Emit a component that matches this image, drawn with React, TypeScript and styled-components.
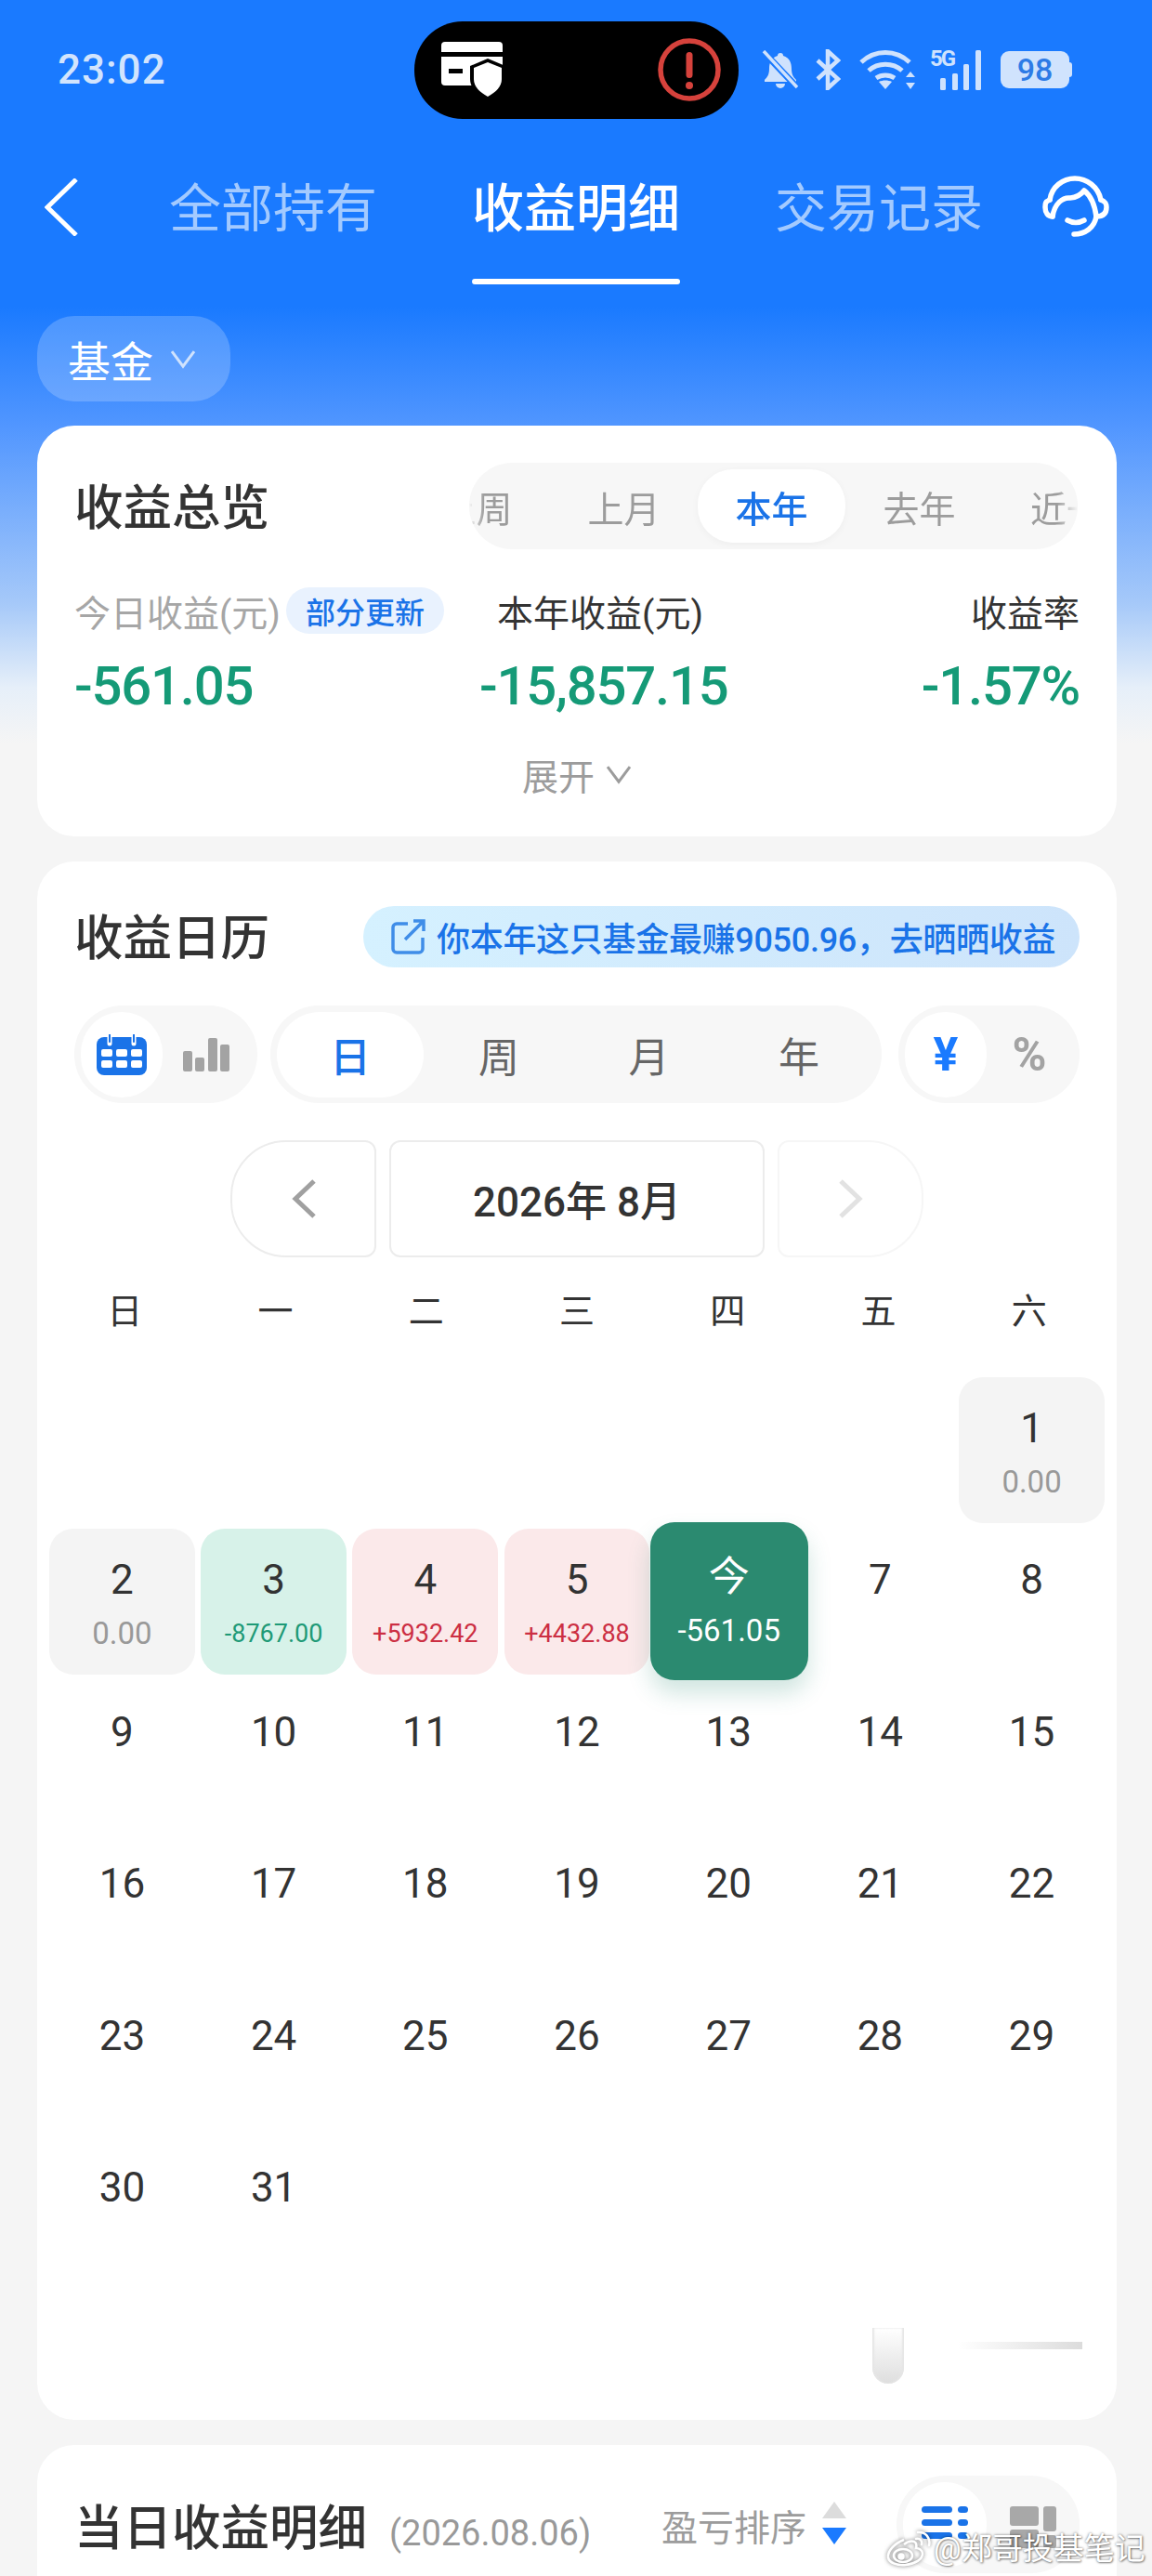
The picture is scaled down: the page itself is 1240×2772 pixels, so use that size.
import { createGlobalStyle } from 'styled-components';
import styled from 'styled-components';

const GlobalStyle = createGlobalStyle`
  html, body {
    margin: 0;
    padding: 0;
    background: #f5f5f5;
  }
  body {
    font-family: Roboto, "Noto Sans CJK SC", sans-serif;
  }
  * {
    box-sizing: border-box;
  }
`;

const BLUE = '#1a73e8';
const GREEN = '#159a77';

type Tone = 'plain' | 'flat' | 'loss' | 'gain' | 'today';

interface DayCell {
  label: string;
  amount?: string;
  tone: Tone;
}

const WEEKDAYS = ['日', '一', '二', '三', '四', '五', '六'];

const buildDays = (): (DayCell | null)[] => {
  const days: (DayCell | null)[] = [null, null, null, null, null, null];
  days.push({ label: '1', amount: '0.00', tone: 'flat' });
  days.push({ label: '2', amount: '0.00', tone: 'flat' });
  days.push({ label: '3', amount: '-8767.00', tone: 'loss' });
  days.push({ label: '4', amount: '+5932.42', tone: 'gain' });
  days.push({ label: '5', amount: '+4432.88', tone: 'gain' });
  days.push({ label: '今', amount: '-561.05', tone: 'today' });
  for (let d = 7; d <= 31; d++) {
    days.push({ label: String(d), tone: 'plain' });
  }
  return days;
};

const Page = styled.div`
  position: relative;
  width: 1240px;
  height: 2772px;
  overflow: hidden;
  background: linear-gradient(
    180deg,
    #1a7aff 0,
    #1a7aff 330px,
    #5196ff 458px,
    #a6c9f9 650px,
    #e6eff9 740px,
    #f5f5f5 800px
  );
`;

const StatusBar = styled.div`
  display: flex;
  align-items: center;
  height: 149px;
  padding-left: 62px;
`;

const Clock = styled.div`
  width: 116px;
  font-size: 44px;
  font-weight: 500;
  letter-spacing: 1px;
  color: #d2e4fd;
`;

const Island = styled.div`
  display: flex;
  align-items: center;
  justify-content: space-between;
  width: 349px;
  height: 105px;
  margin-top: 1px;
  margin-left: 268px;
  padding: 0 19px 0 29px;
  border-radius: 52px;
  background: #000;
`;

const StatusIcons = styled.div`
  display: flex;
  align-items: center;
  margin-left: 25px;
`;

const BatteryBody = styled.div`
  display: flex;
  align-items: center;
  justify-content: center;
  width: 74px;
  height: 40px;
  margin-left: 20px;
  border-radius: 9px;
  background: #d0e3fd;
  font-size: 34px;
  font-weight: 500;
  color: #2d7be6;
`;

const BatteryCap = styled.div`
  width: 3px;
  height: 16px;
  border-radius: 0 3px 3px 0;
  background: #d0e3fd;
`;

const NavBar = styled.div`
  display: flex;
  align-items: flex-start;
  height: 160px;
  padding: 41px 0 0 48px;
`;

const BackIcon = styled.svg`
  flex: none;
  width: 36px;
  height: 62px;
  margin-top: 2px;
`;

const NavTabs = styled.div`
  display: flex;
  gap: 102px;
  margin-left: 98px;
`;

const NavTab = styled.div<{ $active?: boolean }>`
  position: relative;
  width: 224px;
  height: 116px;
  padding-top: 3px;
  line-height: 64px;
  text-align: center;
  font-size: 56px;
  font-weight: ${(p) => (p.$active ? 500 : 400)};
  color: ${(p) => (p.$active ? '#fff' : '#a3caff')};

  ${(p) =>
    p.$active &&
    `
    &::after {
      content: '';
      position: absolute;
      left: 0;
      right: 0;
      bottom: 0;
      height: 6px;
      border-radius: 3px;
      background: #fff;
    }
  `}
`;

const HeadsetIcon = styled.svg`
  flex: none;
  width: 72px;
  height: 66px;
  margin-left: 64px;
  margin-top: -1px;
`;

const FundChip = styled.div`
  display: flex;
  align-items: center;
  width: 208px;
  height: 92px;
  margin: 31px 0 0 40px;
  padding-left: 33px;
  border-radius: 40px;
  background: rgba(255, 255, 255, 0.2);
  font-size: 46px;
  color: #fff;
`;

const DownIcon = styled.svg<{ $size: number; $gap: number }>`
  flex: none;
  width: ${(p) => p.$size}px;
  height: ${(p) => p.$size * 0.8}px;
  margin-left: ${(p) => p.$gap}px;
`;

const Cards = styled.div`
  display: flex;
  flex-direction: column;
  gap: 27px;
  margin-top: 26px;
  padding: 0 38px 0 40px;
`;

const Card = styled.section`
  position: relative;
  padding: 0 40px;
  border-radius: 40px;
  background: #fff;
`;

const OverviewCard = styled(Card)`
  height: 442px;
  padding-top: 40px;
`;

const CalendarCard = styled(Card)`
  height: 1677px;
  padding-top: 48px;
`;

const DetailCard = styled(Card)`
  height: 220px;
  padding-top: 33px;
`;

const CardHead = styled.div`
  display: flex;
  align-items: center;
  justify-content: space-between;
`;

const CardTitle = styled.h2`
  margin: 4px 0 0;
  font-size: 52.5px;
  font-weight: 500;
  line-height: 60px;
  color: #333;
  white-space: nowrap;
`;

const PeriodRail = styled.div`
  position: relative;
  width: 655px;
  height: 93px;
  border-radius: 46px;
  background: #f7f7f7;
  overflow: hidden;
  margin-right: 2px;
`;

const PeriodTrack = styled.div`
  display: flex;
  align-items: center;
  height: 100%;
  margin-left: -72px;
  -webkit-mask-image: linear-gradient(90deg, transparent 72px, #000 88px, #000 705px, transparent 727px);
  mask-image: linear-gradient(90deg, transparent 72px, #000 88px, #000 705px, transparent 727px);
`;

const Period = styled.div<{ $active?: boolean; $width?: number }>`
  flex: none;
  display: flex;
  align-items: center;
  justify-content: center;
  width: ${(p) => p.$width || 159}px;
  height: 79px;
  border-radius: 38px;
  font-size: 39px;
  font-weight: ${(p) => (p.$active ? 500 : 400)};
  color: ${(p) => (p.$active ? BLUE : '#9c9c9c')};
  background: ${(p) => (p.$active ? '#fff' : 'transparent')};
  box-shadow: ${(p) => (p.$active ? '0 2px 8px rgba(0, 0, 0, 0.04)' : 'none')};
`;

const Metrics = styled.div`
  display: grid;
  grid-template-columns: 436px 260px 1fr;
  grid-template-rows: 50px 60px;
  row-gap: 26px;
  margin-top: 41px;
`;

const MetricLabel = styled.div<{ $muted?: boolean; $align?: string }>`
  display: flex;
  align-items: center;
  justify-content: ${(p) => p.$align || 'flex-start'};
  font-size: 39px;
  white-space: nowrap;
  color: ${(p) => (p.$muted ? '#a6a6a6' : '#333')};
`;

const Badge = styled.span`
  display: inline-flex;
  align-items: center;
  justify-content: center;
  width: 170px;
  height: 50px;
  margin-left: 6px;
  border-radius: 25px;
  background: #e9f2fe;
  font-size: 32px;
  font-weight: 500;
  color: ${BLUE};
`;

const MetricValue = styled.div<{ $align?: string }>`
  font-size: 58px;
  line-height: 60px;
  font-weight: 500;
  letter-spacing: -1.2px;
  color: ${GREEN};
  white-space: nowrap;
  text-align: ${(p) => p.$align || 'left'};
`;

const ExpandRow = styled.div`
  display: flex;
  align-items: center;
  justify-content: center;
  height: 50px;
  margin-top: 40px;
  font-size: 39px;
  color: #9c9c9c;
`;

const ShareBanner = styled.div`
  display: flex;
  align-items: center;
  width: 771px;
  height: 66px;
  padding-left: 30px;
  border-radius: 33px;
  background: linear-gradient(90deg, #d5f1ff, #cde4fb);
  font-size: 36px;
  font-weight: 500;
  letter-spacing: -0.3px;
  color: ${BLUE};
  white-space: nowrap;
`;

const ShareIcon = styled.svg`
  flex: none;
  width: 38px;
  height: 38px;
  margin-right: 11px;
`;

const Toolbar = styled.div`
  display: flex;
  margin-top: 41px;
`;

const Toggle = styled.div<{ $width: number; $gap?: number }>`
  display: flex;
  align-items: center;
  flex: none;
  width: ${(p) => p.$width}px;
  height: 105px;
  margin-left: ${(p) => p.$gap || 0}px;
  padding: 0 7px;
  border-radius: 52px;
  background: #f7f7f7;
`;

const ToggleItem = styled.div<{ $width: number; $active?: boolean; $color?: string; $symbol?: boolean }>`
  display: flex;
  align-items: center;
  justify-content: center;
  flex: none;
  width: ${(p) => p.$width}px;
  height: 92px;
  border-radius: 46px;
  background: ${(p) => (p.$active ? '#fff' : 'transparent')};
  font-size: ${(p) => (p.$symbol ? 50 : 44)}px;
  font-weight: ${(p) => (p.$symbol ? 700 : p.$color ? 500 : 400)};
  color: ${(p) => p.$color || '#666'};
`;

const MonthNav = styled.div`
  display: flex;
  justify-content: center;
  gap: 14px;
  margin-top: 40px;
`;

const MonthArrow = styled.div<{ $side: 'left' | 'right' }>`
  display: flex;
  align-items: center;
  justify-content: center;
  width: 157px;
  height: 126px;
  border: 2px solid ${(p) => (p.$side === 'left' ? '#ececec' : '#f6f6f6')};
  border-radius: ${(p) => (p.$side === 'left' ? '60px 12px 12px 60px' : '12px 60px 60px 12px')};
`;

const MonthLabel = styled.div`
  display: flex;
  align-items: center;
  justify-content: center;
  width: 404px;
  height: 126px;
  border: 2px solid #ececec;
  border-radius: 12px;
  font-size: 44px;
  font-weight: 500;
  color: #333;
  white-space: pre;
`;

const ArrowIcon = styled.svg`
  width: 28px;
  height: 42px;
`;

const Calendar = styled.div`
  margin: 32px -27px 0 -27px;
`;

const WeekRow = styled.div`
  display: grid;
  grid-template-columns: repeat(7, 1fr);
  height: 52px;
  line-height: 52px;
  text-align: center;
  font-size: 38px;
  color: #333;
`;

const DayGrid = styled.div`
  display: grid;
  grid-template-columns: repeat(7, 1fr);
  grid-auto-rows: 157px;
  gap: 6.4px 6.33px;
  margin-top: 45px;
`;

const toneBackground: Record<Tone, string> = {
  plain: 'transparent',
  flat: '#f4f4f4',
  loss: '#d7f2e9',
  gain: '#fbe9ea',
  today: '#2b8a70',
};

const toneAmount: Record<Tone, string> = {
  plain: '#999',
  flat: '#999',
  loss: '#1f9a77',
  gain: '#cc2f43',
  today: '#fff',
};

const Day = styled.div<{ $tone: Tone }>`
  position: relative;
  display: flex;
  flex-direction: column;
  align-items: center;
  padding-top: ${(p) => (p.$tone === 'today' ? 35 : 31)}px;
  border-radius: 26px;
  background: ${(p) => toneBackground[p.$tone]};

  ${(p) =>
    p.$tone === 'today' &&
    `
    margin: -7px -7px -6px -6px;
    z-index: 1;
    box-shadow: 0 14px 24px rgba(43, 138, 112, 0.22);
  `}
`;

const DayLabel = styled.div<{ $tone: Tone }>`
  font-size: 44px;
  line-height: 48px;
  color: ${(p) => (p.$tone === 'today' ? '#fff' : '#333')};
`;

const DayAmount = styled.div<{ $tone: Tone }>`
  margin-top: 14px;
  line-height: 40px;
  font-size: ${(p) => (p.$tone === 'flat' || p.$tone === 'today' ? 33 : 27)}px;
  color: ${(p) => toneAmount[p.$tone]};
  white-space: nowrap;
`;

// leftover pull handle that sits faded over the bottom of the calendar
const ScrollHintBar = styled.div`
  position: absolute;
  left: 899px;
  top: 1578px;
  width: 34px;
  height: 60px;
  border-radius: 0 0 17px 17px;
  background: linear-gradient(180deg, #fff, #dedede);
  box-shadow: inset 2px 0 2px #e6e6e6, inset -2px 0 2px #e6e6e6;
`;

const ScrollHintTrack = styled.div`
  position: absolute;
  left: 933px;
  top: 1593px;
  width: 192px;
  height: 8px;
  background: linear-gradient(90deg, #fff 30%, #dcdcdc);
`;

const DetailHead = styled.div`
  display: flex;
  align-items: center;
`;

const DetailTitleWrap = styled.div`
  display: flex;
  align-items: baseline;
  flex: none;
  width: 632px;
  margin-top: 4px;
`;

const DetailDate = styled.span`
  margin-left: 24px;
  font-size: 38px;
  color: #999;
  white-space: nowrap;
`;

const SortLabel = styled.div`
  flex: none;
  font-size: 39px;
  color: #9c9c9c;
`;

const SortArrows = styled.svg`
  flex: none;
  width: 28px;
  height: 47px;
  margin: -2px 0 0 16px;
`;

const Watermark = styled.div`
  position: absolute;
  left: 953px;
  top: 2722px;
  display: flex;
  align-items: center;
  font-size: 33px;
  line-height: 42px;
  color: #fff;
  white-space: nowrap;
  text-shadow: 0 0 3px rgba(0, 0, 0, 0.55), 1px 1px 2px rgba(0, 0, 0, 0.35);
`;

const WeiboMark = styled.svg`
  flex: none;
  width: 50px;
  height: 40px;
  margin-right: 2px;
  filter: drop-shadow(0 0 2px rgba(0, 0, 0, 0.55));
`;

const Down = ({ size, color, gap }: { size: number; color: string; gap: number }) => (
  <DownIcon $size={size} $gap={gap} viewBox="0 0 28 22" fill="none" stroke={color} strokeWidth="3">
    <path d="M2 3l12 16L26 3" />
  </DownIcon>
);

const App = () => {
  const days = buildDays();

  return (
    <>
      <GlobalStyle />
      <Page>
        <StatusBar>
          <Clock>23:02</Clock>
          <Island>
            <svg width="66" height="60" viewBox="0 0 66 60">
              <path d="M4 0h58a4 4 0 0 1 4 4v7H0V4a4 4 0 0 1 4-4z" fill="#fff" />
              <path d="M0 16h66v27a4 4 0 0 1-4 4H4a4 4 0 0 1-4-4z" fill="#fff" />
              <rect x="8" y="29" width="15" height="5" fill="#000" />
              <path d="M50 18l19 8v14c0 10-8 17-19 23-11-6-19-13-19-23V26z" fill="#000" />
              <path d="M50 22l15 6v12c0 8-6 14-15 19-9-5-15-11-15-19V28z" fill="#fff" />
            </svg>
            <svg width="68" height="68" viewBox="0 0 68 68">
              <circle cx="34" cy="34" r="31" fill="none" stroke="#d6423c" strokeWidth="5.5" />
              <rect x="30.5" y="15" width="7" height="28" rx="3.5" fill="#d6423c" />
              <circle cx="34" cy="51" r="4" fill="#d6423c" />
            </svg>
          </Island>
          <StatusIcons>
            <svg width="40" height="42" viewBox="0 0 40 42">
              <path
                d="M20 3a3 3 0 0 1 3 3c7 2 9 8 9 14 0 6 2 9 5 12v2H3v-2c3-3 5-6 5-12 0-6 2-12 9-14a3 3 0 0 1 3-3zM15 36h10a5 5 0 0 1-10 0z"
                fill="#cfe2fd"
              />
              <path d="M2 2l36 38" stroke="#1a7aff" strokeWidth="7" />
              <path d="M2 1l36 39" stroke="#cfe2fd" strokeWidth="3.5" />
            </svg>
            <svg width="28" height="44" viewBox="0 0 28 44" style={{ marginLeft: 17 }} fill="none" stroke="#cfe2fd" strokeWidth="4.5">
              <path d="M3 12l22 20-11 10V2l11 10L3 32" />
            </svg>
            <svg width="62" height="44" viewBox="0 0 62 44" style={{ marginLeft: 19 }} fill="none" stroke="#cfe2fd" strokeWidth="5">
              <path d="M3 14c15-14 37-14 52 0" />
              <path d="M11 23c10-9 26-9 36 0" />
              <path d="M19 31c6-4 14-4 20 0" />
              <path d="M29 43l-7-8c4-2 10-2 14 0z" fill="#cfe2fd" stroke="none" />
              <path d="M56 24l5 6H51zM56 43l5-7H51z" fill="#cfe2fd" stroke="none" />
            </svg>
            <svg width="56" height="44" viewBox="0 0 56 44" style={{ marginLeft: 15 }}>
              <text x="0" y="18" fontFamily="Roboto" fontSize="24" fontWeight="700" fill="#cfe2fd" letterSpacing="-2">
                5G
              </text>
              <rect x="11" y="31" width="6" height="13" rx="1.5" fill="#cfe2fd" />
              <rect x="24" y="26" width="6" height="18" rx="1.5" fill="#cfe2fd" />
              <rect x="36" y="16" width="6" height="28" rx="1.5" fill="#cfe2fd" />
              <rect x="49" y="1" width="6" height="43" rx="1.5" fill="#cfe2fd" />
            </svg>
            <BatteryBody>98</BatteryBody>
            <BatteryCap />
          </StatusIcons>
        </StatusBar>

        <NavBar>
          <BackIcon viewBox="0 0 36 62" fill="none" stroke="#fff" strokeWidth="5">
            <path d="M34 1L3 31l31 30" />
          </BackIcon>
          <NavTabs>
            <NavTab>全部持有</NavTab>
            <NavTab $active>收益明细</NavTab>
            <NavTab>交易记录</NavTab>
          </NavTabs>
          <HeadsetIcon viewBox="0 0 72 66" fill="none" stroke="#fff" strokeWidth="5.5" strokeLinecap="round" strokeLinejoin="round">
            <path d="M8 26C10 12 22 3 35 3c13 0 25 9 28 23" />
            <path d="M8 26c-5 2-5 4-5 8 0 6 3 10 8 10" />
            <path d="M11 44c2-14 11-21 19-20 6 0 12-4 15-8 5 4 11 12 13 28" />
            <path d="M63 26c5 2 6 4 6 8 0 6-3 10-11 10" />
            <path d="M27 48q9 5 18 0" />
            <path d="M58 44c-2 12-12 19-24 19" />
          </HeadsetIcon>
        </NavBar>

        <FundChip>
          基金
          <Down size={28} color="#cfe2fd" gap={18} />
        </FundChip>

        <Cards>
          <OverviewCard>
            <CardHead>
              <CardTitle>收益总览</CardTitle>
              <PeriodRail>
                <PeriodTrack>
                  <Period>上周</Period>
                  <Period>上月</Period>
                  <Period $active>本年</Period>
                  <Period>去年</Period>
                  <Period $width={197}>近一年</Period>
                </PeriodTrack>
              </PeriodRail>
            </CardHead>
            <Metrics>
              <MetricLabel $muted>
                今日收益(元)
                <Badge>部分更新</Badge>
              </MetricLabel>
              <MetricLabel $align="center">本年收益(元)</MetricLabel>
              <MetricLabel $align="flex-end">收益率</MetricLabel>
              <MetricValue>-561.05</MetricValue>
              <MetricValue $align="center">-15,857.15</MetricValue>
              <MetricValue $align="right">-1.57%</MetricValue>
            </Metrics>
            <ExpandRow>
              展开
              <Down size={28} color="#9c9c9c" gap={12} />
            </ExpandRow>
          </OverviewCard>

          <CalendarCard>
            <CardHead>
              <CardTitle>收益日历</CardTitle>
              <ShareBanner>
                <ShareIcon viewBox="0 0 38 38" fill="none" stroke="#3f8de8" strokeWidth="3.5">
                  <path d="M18 5H6a4 4 0 0 0-4 4v23a4 4 0 0 0 4 4h24a4 4 0 0 0 4-4V20" />
                  <path d="M15 22L35 2M24 2h11v11" />
                </ShareIcon>
                你本年这只基金最赚9050.96，去晒晒收益
              </ShareBanner>
            </CardHead>

            <Toolbar>
              <Toggle $width={197}>
                <ToggleItem $width={88} $active>
                  <svg width="54" height="44" viewBox="0 0 54 44">
                    <path d="M8 3h38a8 8 0 0 1 8 8v25a8 8 0 0 1-8 8H8a8 8 0 0 1-8-8V11a8 8 0 0 1 8-8z" fill="#1a73e8" />
                    <path d="M14 1v9M40 1v9" stroke="#fff" strokeWidth="5" strokeLinecap="round" />
                    <path d="M14 0v8M40 0v8" stroke="#1a73e8" strokeWidth="2" strokeLinecap="round" />
                    <g fill="#fff">
                      <rect x="5" y="16" width="12" height="8" rx="2" />
                      <rect x="21" y="16" width="12" height="8" rx="2" />
                      <rect x="37" y="16" width="12" height="8" rx="2" />
                      <rect x="5" y="28" width="12" height="8" rx="2" />
                      <rect x="21" y="28" width="12" height="8" rx="2" />
                      <rect x="37" y="28" width="12" height="8" rx="2" />
                    </g>
                  </svg>
                </ToggleItem>
                <ToggleItem $width={94}>
                  <svg width="50" height="36" viewBox="0 0 50 36" fill="#a3a3a3">
                    <rect x="0" y="14" width="10" height="22" rx="2" />
                    <rect x="13" y="21" width="10" height="15" rx="2" />
                    <rect x="27" y="0" width="10" height="36" rx="2" />
                    <rect x="40" y="7" width="10" height="29" rx="2" />
                  </svg>
                </ToggleItem>
              </Toggle>
              <Toggle $width={658} $gap={14}>
                <ToggleItem $width={158} $active $color={BLUE}>
                  日
                </ToggleItem>
                <ToggleItem $width={162}>周</ToggleItem>
                <ToggleItem $width={161}>月</ToggleItem>
                <ToggleItem $width={162}>年</ToggleItem>
              </Toggle>
              <Toggle $width={195} $gap={18}>
                <ToggleItem $width={88} $active $color="#1a7aff" $symbol>
                  ¥
                </ToggleItem>
                <ToggleItem $width={92} $color="#a3a3a3" $symbol>
                  %
                </ToggleItem>
              </Toggle>
            </Toolbar>

            <MonthNav>
              <MonthArrow $side="left">
                <ArrowIcon viewBox="0 0 28 42" fill="none" stroke="#a0a0a0" strokeWidth="5">
                  <path d="M25 2L5 21l20 19" />
                </ArrowIcon>
              </MonthArrow>
              <MonthLabel>2026年 8月</MonthLabel>
              <MonthArrow $side="right">
                <ArrowIcon viewBox="0 0 28 42" fill="none" stroke="#e2e2e2" strokeWidth="5">
                  <path d="M3 2l20 19L3 40" />
                </ArrowIcon>
              </MonthArrow>
            </MonthNav>

            <Calendar>
              <WeekRow>
                {WEEKDAYS.map((w) => (
                  <div key={w}>{w}</div>
                ))}
              </WeekRow>
              <DayGrid>
                {days.map((day, i) =>
                  day ? (
                    <Day key={i} $tone={day.tone}>
                      <DayLabel $tone={day.tone}>{day.label}</DayLabel>
                      {day.amount && <DayAmount $tone={day.tone}>{day.amount}</DayAmount>}
                    </Day>
                  ) : (
                    <div key={i} />
                  ),
                )}
              </DayGrid>
            </Calendar>
            <ScrollHintBar />
            <ScrollHintTrack />
          </CalendarCard>

          <DetailCard>
            <DetailHead>
              <DetailTitleWrap>
                <CardTitle>当日收益明细</CardTitle>
                <DetailDate>(2026.08.06)</DetailDate>
              </DetailTitleWrap>
              <SortLabel>盈亏排序</SortLabel>
              <SortArrows viewBox="0 0 28 47">
                <path d="M14 0l13 18H1z" fill="#dcdcdc" />
                <path d="M1 28h26L14 46z" fill="#1a7aff" />
              </SortArrows>
              <Toggle $width={197} $gap={53}>
                <ToggleItem $width={90} $active>
                  <svg width="50" height="50" viewBox="0 0 50 50" fill="#1a73e8" style={{ marginTop: 10 }}>
                    <rect x="0" y="0" width="33" height="7" rx="3.5" />
                    <rect x="39" y="0" width="11" height="7" rx="3.5" />
                    <rect x="0" y="14" width="33" height="7" rx="3.5" />
                    <rect x="39" y="14" width="11" height="7" rx="3.5" />
                    <rect x="0" y="28" width="33" height="7" rx="3.5" />
                    <rect x="39" y="28" width="11" height="7" rx="3.5" />
                  </svg>
                </ToggleItem>
                <ToggleItem $width={100}>
                  <svg width="50" height="50" viewBox="0 0 50 50" fill="#a8a8a8" style={{ marginTop: 10 }}>
                    <rect x="0" y="0" width="31" height="21" rx="3" />
                    <rect x="36" y="0" width="14" height="27" rx="3" />
                    <rect x="0" y="25" width="31" height="20" rx="3" />
                    <rect x="36" y="31" width="14" height="14" rx="3" />
                  </svg>
                </ToggleItem>
              </Toggle>
            </DetailHead>
          </DetailCard>
        </Cards>

        <Watermark>
          <WeiboMark viewBox="0 0 50 40" fill="none" stroke="#fff" strokeWidth="2.5">
            <path d="M20 10C10 14 2 22 3 29c1 6 10 9 19 8 10-1 18-6 18-12 0-4-4-6-7-6 1-4 0-6-2-7-3-1-7 0-11 3" />
            <ellipse cx="19" cy="27" rx="10" ry="7" />
            <circle cx="17" cy="28" r="2.5" fill="#fff" />
            <path d="M33 9c4-1 7 2 6 6M35 2c8-1 14 6 12 14" strokeLinecap="round" />
          </WeiboMark>
          @郑哥投基笔记
        </Watermark>
      </Page>
    </>
  );
};

export default App;
